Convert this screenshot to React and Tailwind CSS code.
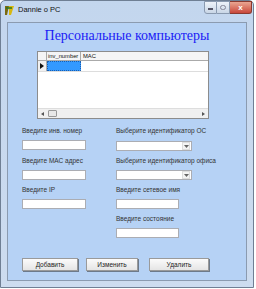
import React from "react";

const lbl = "h-[8px] text-[6.5px] leading-[8px] text-[#333] whitespace-nowrap";
const inp = "h-[10px] bg-white border border-[#abadb3]";

function Combo({ w }) {
  return (
    <div className={`${inp} flex justify-end items-center`} style={{ width: w }}>
      <div className="w-[8px] h-[8px] mr-[1px] border border-[#ddd] bg-[#f4f4f4] flex items-center justify-center">
        <svg width="5" height="3" viewBox="0 0 5 3"><path d="M0 0h5L2.5 3z" fill="#666" /></svg>
      </div>
    </div>
  );
}

function Btn({ children, w }) {
  return (
    <div
      className="h-[13px] flex items-center justify-center text-[6.5px] text-[#222] bg-gradient-to-b from-[#fbfbfb] to-[#e5e5e5] border border-[#9a9a9a] shadow-[1px_1px_0_#6d7a8a]"
      style={{ width: w }}
    >
      {children}
    </div>
  );
}

export default function App() {
  return (
    <div className="w-[256px] h-[289px] bg-white" style={{ fontFamily: "'Liberation Sans', Arial, sans-serif" }}>
      <div className="w-[254px] h-[288px] rounded-t-[5px] border border-[#6f7f94] bg-gradient-to-b from-[#c3d6ee] to-[#cddcef] flex flex-col">
        {/* Title bar */}
        <div className="h-[21px] shrink-0 flex items-start relative">
          <div className="mt-[4px] ml-[3px] w-[11px] h-[11px] flex items-center justify-center">
            <svg width="11" height="11" viewBox="0 0 11 11">
              <path d="M1 1h4L3 10H1z" fill="#7a6a10" />
              <path d="M5 1h5L7 10H5z" fill="#d8b810" />
              <path d="M2 3h6" stroke="#2a7a20" strokeWidth="1.5" />
            </svg>
          </div>
          <div className="mt-[4px] ml-[3px] text-[7.5px] leading-[10px] text-[#111]">Dannie o PC</div>
          <div className="absolute right-[1px] top-0 flex">
            <div className="w-[13px] h-[13px] border border-[#8a9ab0] rounded-bl-[3px] bg-gradient-to-b from-[#eef3fa] to-[#c9d6e6] flex items-center justify-center">
              <div className="w-[5px] h-[2px] bg-[#556] mt-[3px]" />
            </div>
            <div className="w-[13px] h-[13px] border-y border-r border-[#8a9ab0] bg-gradient-to-b from-[#eef3fa] to-[#c9d6e6] flex items-center justify-center">
              <div className="w-[6px] h-[5px] border border-[#889] rounded-full" />
            </div>
            <div className="w-[22px] h-[13px] border-y border-r border-[#8a3a30] rounded-br-[3px] bg-gradient-to-b from-[#e9a592] to-[#c8453a] flex items-center justify-center text-white text-[8px] font-bold leading-none">
              x
            </div>
          </div>
        </div>
        {/* Client area */}
        <div className="mx-[6px] h-[259px] border border-[#8b9bb0] bg-[#b6d2f5] flex flex-col">
          <div className="h-[28px] shrink-0 pt-[4px] text-center text-[14px] leading-[18px] text-[#1c1cf5]" style={{ fontFamily: "'Liberation Serif', 'Times New Roman', serif" }}>
            Персональные компьютеры
          </div>
          {/* Grid */}
          <div className="ml-[29px] w-[172px] h-[68px] shrink-0 bg-white border border-[#8c8c8c] flex flex-col">
            <div className="h-[9px] flex border-b border-[#aaa] bg-[#f5f5f5] text-[5.8px] leading-[8px] text-[#111]">
              <div className="w-[9px] border-r border-[#aaa]" />
              <div className="w-[34px] border-r border-[#aaa] pl-[1px] whitespace-nowrap">inv_number</div>
              <div className="flex-1 pl-[2px]">MAC</div>
            </div>
            <div className="h-[11px] flex border-b border-[#ddd]">
              <div className="w-[9px] border-r border-[#aaa] bg-[#f0f0f0] flex items-center justify-center">
                <svg width="4" height="6" viewBox="0 0 4 6"><path d="M0 0l4 3-4 3z" fill="#111" /></svg>
              </div>
              <div className="w-[34px] bg-[#3399ff] border border-[#1a5fb0] border-dotted" />
              <div className="flex-1" />
            </div>
            <div className="flex-1" />
            <div className="h-[10px] flex items-center bg-[#f0f0f0] border-t border-[#ddd]">
              <svg width="6" height="6" viewBox="0 0 6 6" className="ml-[2px]"><path d="M4 1L1 3l3 2z" fill="#555" /></svg>
              <div className="ml-[2px] w-[9px] h-[7px] border border-[#999] rounded-[1px] bg-[#e8e8e8]" />
              <div className="flex-1" />
              <svg width="6" height="6" viewBox="0 0 6 6" className="mr-[2px]"><path d="M2 1l3 2-3 2z" fill="#555" /></svg>
            </div>
          </div>
          {/* Form */}
          <div className="mt-[8px] flex">
            <div className="ml-[14px] w-[94px] flex flex-col">
              <div className={lbl}>Введите инв. номер</div>
              <div className={`${inp} w-[64px] mt-[5px]`} />
              <div className={`${lbl} mt-[7px]`}>Введите МАС адрес</div>
              <div className={`${inp} w-[64px] mt-[5px]`} />
              <div className={`${lbl} mt-[6px]`}>Введите IP</div>
              <div className={`${inp} w-[64px] mt-[5px]`} />
            </div>
            <div className="flex flex-col">
              <div className={lbl}>Выберите идентификатор ОС</div>
              <div className="mt-[6px]"><Combo w={76} /></div>
              <div className={`${lbl} mt-[6px]`}>Выберите идентификатор офиса</div>
              <div className="mt-[5px]"><Combo w={76} /></div>
              <div className={`${lbl} mt-[6px]`}>Введите сетевое имя</div>
              <div className={`${inp} w-[63px] mt-[5px]`} />
              <div className={`${lbl} mt-[6px]`}>Введите состояние</div>
              <div className={`${inp} w-[63px] mt-[5px]`} />
            </div>
          </div>
          <div className="mt-[20px] ml-[14px] flex">
            <Btn w={56}>Добавить</Btn>
            <div className="ml-[8px]"><Btn w={52}>Изменить</Btn></div>
            <div className="ml-[11px]"><Btn w={60}>Удалить</Btn></div>
          </div>
        </div>
      </div>
    </div>
  );
}
